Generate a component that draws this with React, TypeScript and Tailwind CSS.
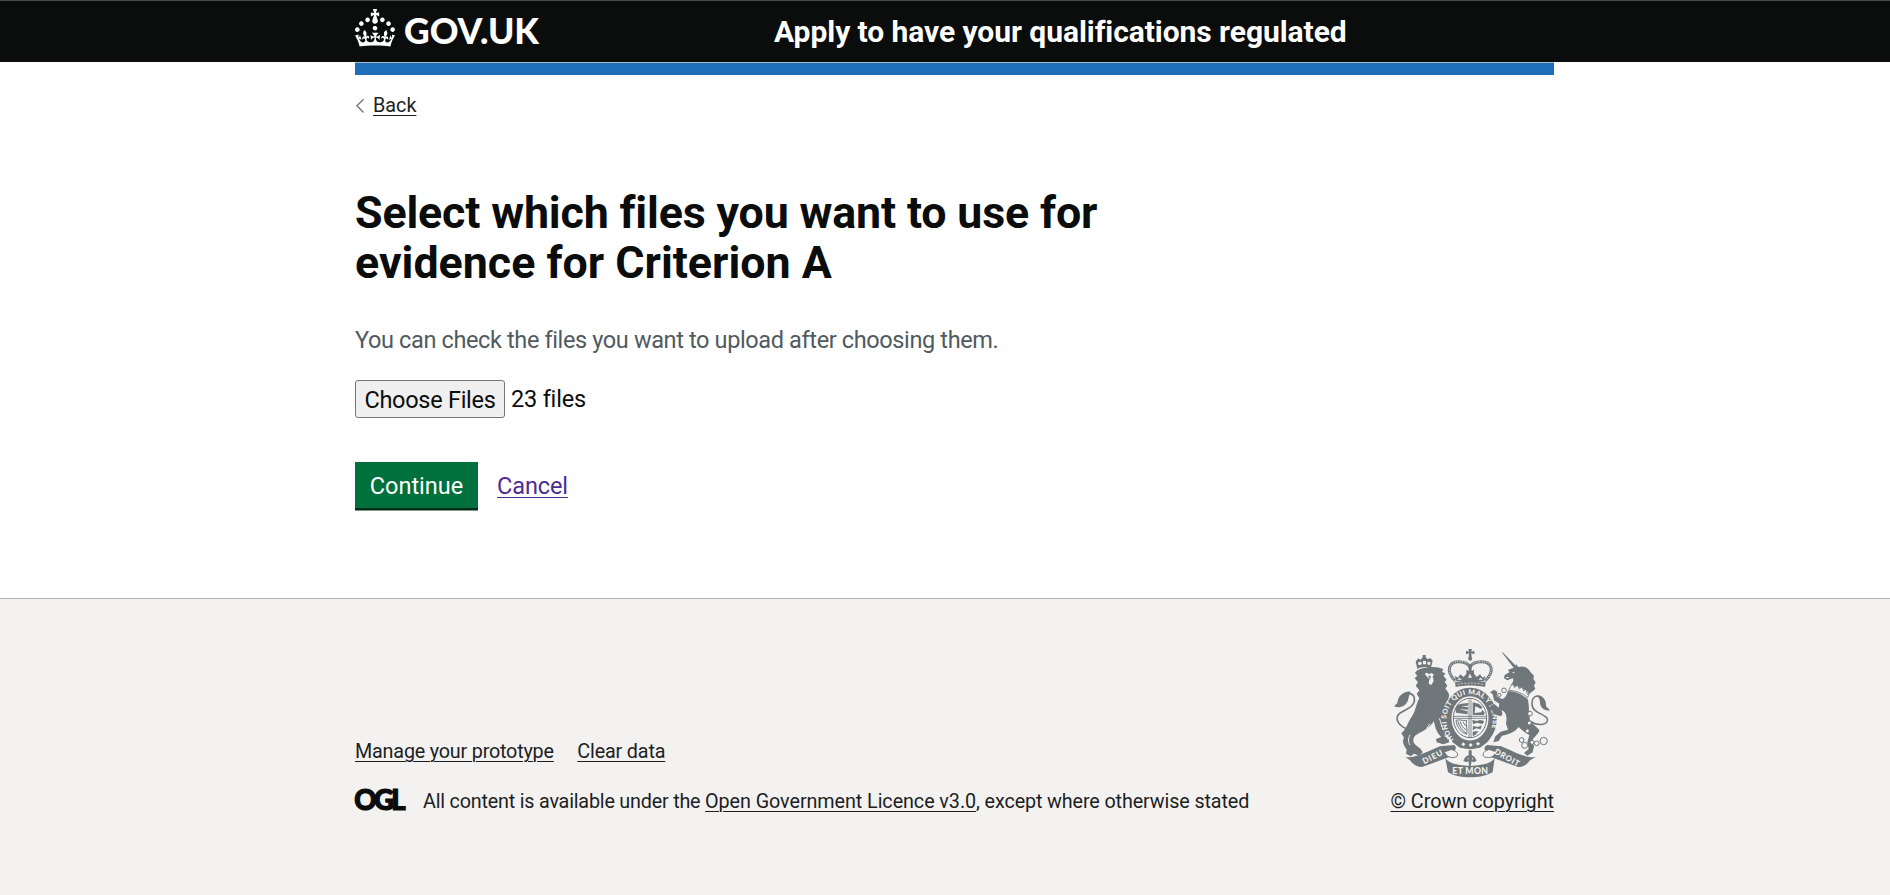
import React from "react";

const CROWN =
  "M22.6 10.4c-1 .4-2-.1-2.4-1-.4-.9.1-2 1-2.4.9-.4 2 .1 2.4 1s-.1 2-1 2.4m-5.9 6.7c-.9.4-2-.1-2.4-1-.4-.9.1-2 1-2.4.9-.4 2 .1 2.4 1s-.1 2-1 2.4m10.8-3.7c-1 .4-2-.1-2.4-1-.4-.9.1-2 1-2.4.9-.4 2 .1 2.4 1s0 2-1 2.4m3.3 4.8c-1 .4-2-.1-2.4-1-.4-.9.1-2 1-2.4.9-.4 2 .1 2.4 1s-.1 2-1 2.4M17 4.7l2.3 1.2V2.5l-2.3.7-.2-.2.9-3h-3.4l.9 3-.2.2c-.1.1-2.3-.7-2.3-.7v3.4L15 4.7c.1.1.1.2.2.2l-1.3 4c-.1.2-.1.4-.1.6 0 1.1.8 2 1.9 2.2h.7c1-.2 1.9-1.1 1.9-2.1 0-.2 0-.4-.1-.6l-1.3-4c-.1-.2 0-.2.1-.3m-7.6 5.7c.9.4 2-.1 2.4-1 .4-.9-.1-2-1-2.4-.9-.4-2 .1-2.4 1s0 2 1 2.4m-5 3c.9.4 2-.1 2.4-1 .4-.9-.1-2-1-2.4-.9-.4-2 .1-2.4 1s.1 2 1 2.4m-3.2 4.8c.9.4 2-.1 2.4-1 .4-.9-.1-2-1-2.4-.9-.4-2 .1-2.4 1s0 2 1 2.4m14.8 11c4.4 0 8.6.3 12.3.8 1.1-4.5 2.4-7 3.7-8.8l-2.5-.9c.2 1.3.3 1.9 0 2.7-.4-.4-.8-1.1-1.1-2.3l-1.2 4c.7-.5 1.3-.8 2-.9-1.1 2.5-2.6 3.1-3.5 3-1.1-.2-1.7-1.2-1.5-2.1.3-1.2 1.5-1.5 2.1-.1 1.1-2.3-.8-3-2-2.3 1.9-1.9 2.1-3.5.6-5.6-2.1 1.6-2.1 3.2-1.2 5.5-1.2-1.4-3.2-.6-2.5 1.6.9-1.4 2.1-.5 1.9.8-.2 1.1-1.7 2.1-3.5 1.9-2.7-.2-2.9-2.1-2.9-3.6.7-.1 1.9.5 2.9 1.9l.4-4.3c-1.1 1.1-2.1 1.4-3.2 1.4.4-1.2 2.1-3 2.1-3h-5.4s1.7 1.9 2.1 3c-1.1 0-2.1-.2-3.2-1.4l.4 4.3c1-1.4 2.2-2 2.9-1.9-.1 1.5-.2 3.4-2.9 3.6-1.9.2-3.4-.8-3.5-1.9-.2-1.3 1-2.2 1.9-.8.7-2.3-1.2-3-2.5-1.6.9-2.2.9-3.9-1.2-5.5-1.5 2-1.3 3.7.6 5.6-1.2-.7-3.1 0-2 2.3.6-1.4 1.8-1.1 2.1.1.2.9-.3 1.9-1.5 2.1-.9.2-2.4-.5-3.5-3 .6 0 1.2.3 2 .9l-1.2-4c-.3 1.1-.7 1.9-1.1 2.3-.3-.8-.2-1.4 0-2.7l-2.9.9C1.3 23 2.6 25.5 3.7 30c3.7-.5 7.9-.8 12.3-.8";

function Header() {
  return (
    <header className="h-[62px] shrink-0 border-t border-[#484b4a] bg-[#0b0c0c] text-white">
      <div className="ml-[355px] flex h-[61px] w-[1199px]">
        <a className="flex w-[419px] items-start pt-2">
          <svg viewBox="0 0 32 30" className="h-[37.5px] w-10 shrink-0" fill="currentColor">
            <path d={CROWN} />
          </svg>
          <svg viewBox="0 -4 160 50" className="-mt-1 ml-2 h-[50px] w-[160px] overflow-visible" fill="currentColor">
            <text x="1" y="35" fontFamily="Lato, sans-serif" fontWeight="900" fontSize="36.5" textLength="135" lengthAdjust="spacingAndGlyphs">GOV.UK</text>
          </svg>
        </a>
        <span className="whitespace-nowrap pt-[12px] text-[30px] font-bold leading-[38px] tracking-[-0.06px]">
          Apply to have your qualifications regulated
        </span>
      </div>
    </header>
  );
}

function Crest() {
  return (
    <svg viewBox="42 42 468 386" className="mr-1 h-[128.7px] w-[156px]" fill="#6f777b">
      {/* lion: crown, body, face, tail */}
      <path d="M112 102L107 80L114 70L122 74L128 66L128 60H137V66L143 73L151 69L158 77L152 101C140 94 124 95 112 102Z" />
      <path d="M114 82L124 80L126 88L116 91ZM129 78L138 78L138 88L129 88ZM143 80L152 82L149 91L142 88Z" fill="#f3f2f1" />
      <path d="M110 107C130 95 170 92 190 103L186 110L197 116L190 122L200 134L194 140L202 152L196 160L204 172C214 186 200 196 196 212C192 228 206 236 212 254C200 270 204 288 208 300L192 302L206 312L208 322L190 328L170 322L168 312L184 306C172 296 164 276 162 258C152 274 134 286 122 292C106 300 100 306 100 318C102 330 114 334 122 342L128 352L118 362L102 356L92 364L78 356L80 344C70 330 66 318 72 308L64 294C78 286 82 264 96 244C108 226 108 206 118 190L110 176L118 166L107 152L114 142L104 130L112 122L105 114Z" />
      <path d="M134 116L142 113L146 118L155 114L162 119L158 124L161 138L154 150L146 146L148 132L140 124Z" fill="#f3f2f1" />
      <path d="M145 122L153 122L150 136Z" />
      <path d="M140 280L150 266M90 300C84 310 84 320 90 330M178 250C184 262 184 276 190 286" fill="none" stroke="#f3f2f1" strokeWidth="3" />
      <path d="M88 284C56 276 42 250 58 236C78 222 106 216 103 190C101 174 84 172 74 184" fill="none" stroke="#6f777b" strokeWidth="5" />
      <path d="M92 170C74 168 54 180 52 204L42 214C64 222 80 210 84 196C86 186 88 178 92 170Z" />
      {/* imperial crown */}
      <path d="M265 42H276L274 50L283 47V58L274 55L275 68H266L267 55L258 58V47L267 50Z" />
      <circle cx="270.5" cy="71" r="6" />
      <path d="M226 138C196 108 206 80 236 80C254 80 264 84 270 96C276 84 288 80 304 80C336 80 346 108 315 138" fill="none" stroke="#6f777b" strokeWidth="9" />
      <path d="M226 138C196 108 206 80 236 80C254 80 264 84 270 96C276 84 288 80 304 80C336 80 346 108 315 138" fill="none" stroke="#f3f2f1" strokeWidth="3" strokeDasharray="3 4" />
      <path d="M266 88H275V108L282 104V116L290 126L300 118L308 128L316 122L312 138H229L224 122L234 128L241 118L251 126L259 116V104L266 108Z" />
      <path d="M238 128L246 134H232ZM302 128L309 134H295ZM270 116L276 128H264Z" fill="#f3f2f1" />
      <path d="M225 141C255 136 287 136 317 141L315 156C285 150 257 150 227 156Z" />
      <path d="M233 148C258 143 284 143 309 148" fill="none" stroke="#f3f2f1" strokeWidth="2" strokeDasharray="6 4" />
      {/* garter */}
      <ellipse cx="270" cy="250" rx="68" ry="79" fill="#f3f2f1" stroke="#6f777b" strokeWidth="25" />
      <path id="garter" d="M222 314C170 246 216 178 270 178C334 178 362 266 314 316" fill="none" />
      <text fontFamily="Lato, sans-serif" fontWeight="900" fontSize="21" fill="#f3f2f1">
        <textPath href="#garter" textLength="320">HONI SOIT QUI MAL Y PENSE</textPath>
      </text>
      <path d="M226 306L240 318L300 320L316 306L326 318L300 338L270 343L240 338L216 320Z" />
      <path d="M250 322L256 328L250 334L244 328ZM272 324L278 330L272 336L266 330ZM294 320L300 326L294 332L288 326Z" fill="#f3f2f1" />
      {/* shield */}
      <ellipse cx="270" cy="249" rx="50" ry="59" fill="#f3f2f1" stroke="#6f777b" strokeWidth="3" />
      <path d="M267 194V306M273 194V306M222 244H319M222 250H319" stroke="#6f777b" strokeWidth="2.5" />
      <path d="M232 210L244 206L264 204V212L242 213L264 217V224L236 222L263 229V238L228 233L226 224ZM278 202L296 206L308 217L303 222L286 214L284 234L304 232L306 224L314 232L312 240H278ZM277 255L290 258L300 255L313 258L308 267L290 263L279 268ZM279 273L294 276L305 271L302 283L288 280L278 286ZM278 290L296 288L286 300L278 303Z" />
      <path d="M228 256C238 252 246 258 260 256C256 268 264 284 260 298C246 294 230 278 228 256ZM234 259C238 276 246 286 258 294M241 260C244 272 250 280 258 284M249 260L257 273" fill="none" stroke="#6f777b" strokeWidth="3" />
      <path d="M292 216L297 222L292 228L286 222Z" fill="#f3f2f1" />
      {/* unicorn */}
      <path d="M364 50L370 54L409 94L402 100Z" />
      <path d="M402 98L410 88L414 96C434 90 446 100 452 112L462 122L460 132L467 142L462 152L466 162L456 170L448 176C438 162 412 156 392 150C400 140 402 134 398 130L382 136L372 130L374 120L388 112L384 104Z" />
      <path d="M396 112L404 110L402 115ZM378 126L390 126L380 130Z" fill="#f3f2f1" />
      <path d="M392 154L398 146L404 158L412 150L418 162L426 155L431 168L438 162L442 178L448 174L443 188C428 174 404 166 386 166Z" fill="#f3f2f1" stroke="#6f777b" strokeWidth="2.5" />
      <path d="M384 168C408 168 430 180 444 194C448 214 446 236 450 256C458 270 472 276 478 286C476 298 462 306 456 318L462 334L458 352L442 362L432 354L446 342L442 322L448 300C434 292 424 284 416 276C404 292 386 298 366 302L356 318L340 322L346 304L362 290L384 284L378 266C382 244 378 230 364 226C368 234 370 242 360 244C344 240 334 226 330 214L342 206L356 218L358 206L342 196L338 178L330 172L342 164L352 170L350 184L366 192C380 188 380 176 384 168Z" />
      <path d="M448 258C478 276 506 268 502 252C498 236 456 236 456 206C456 184 472 178 486 188" fill="none" stroke="#6f777b" strokeWidth="4.5" />
      <path d="M470 182C486 180 500 194 498 214L510 226C494 230 480 218 480 202C480 192 476 186 470 182Z" />
      <g fill="#f3f2f1" stroke="#6f777b" strokeWidth="3">
        <circle cx="372" cy="166" r="7" />
        <circle cx="358" cy="180" r="5" />
        <circle cx="450" cy="236" r="7" />
        <circle cx="448" cy="264" r="6" />
        <circle cx="442" cy="288" r="6" />
        <circle cx="425" cy="315" r="7" />
        <circle cx="434" cy="331" r="9" />
        <circle cx="456" cy="322" r="6" />
        <circle cx="470" cy="325" r="7" />
        <circle cx="491" cy="318" r="11" />
      </g>
      {/* thistle and motto scroll */}
      <path d="M266 346H275V360L284 366L290 378L280 382L275 378L272 394H268L265 378L260 382L250 378L256 366L266 360Z" />
      <path d="M262 370L266 368L265 374ZM276 368L280 371L276 374Z" fill="#f3f2f1" />
      <path d="M90 376L76 366C104 372 150 346 180 334L222 330C232 336 228 350 212 352L214 364L126 396C112 396 100 390 90 376Z" />
      <path d="M450 376L468 366C438 372 394 346 364 334L322 330C308 336 312 350 328 352L326 364L414 396C428 396 440 390 450 376Z" />
      <path d="M194 352C200 366 212 370 228 366C240 360 228 346 216 344M348 352C342 366 330 370 314 366C302 360 314 346 326 344" fill="#f3f2f1" stroke="#6f777b" strokeWidth="3" />
      <path d="M196 370C206 386 240 392 270 392C300 392 334 386 344 370L338 412C316 424 294 427 270 427C246 427 224 424 204 412Z" />
      <g fontFamily="Lato, sans-serif" fontWeight="900" fontSize="26" fill="#f3f2f1">
        <text transform="translate(133 388) rotate(-28)" fontSize="24" textLength="64">DIEU</text>
        <text x="217" y="418" textLength="107">ET MON</text>
        <text transform="translate(341 355) rotate(29)" fontSize="24" textLength="82">DROIT</text>
      </g>
    </svg>
  );
}

const link = "underline decoration-1 underline-offset-[3px]";

function Footer() {
  return (
    <footer className="h-[297px] shrink-0 border-t border-[#b1b4b6] bg-[#f3f2f1] text-[19.75px] leading-[25px] text-[#1c1e1f]">
      <div className="ml-[355px] flex h-[215px] w-[1199px] items-end justify-between">
        <div>
          <div className="mb-[25px] flex gap-[23.5px]">
            <a className={`${link} tracking-[-0.19px]`}>Manage your prototype</a>
            <a className={`${link} tracking-[-0.16px]`}>Clear data</a>
          </div>
          <div className="flex whitespace-pre">
            <svg viewBox="0 -4 60 34" className="-mb-2 -mt-1 mr-2 h-[34px] w-[60px] overflow-visible" fill="#0b0c0c">
              <text x="-0.8" y="20.7" fontFamily="Lato, sans-serif" fontWeight="900" fontSize="27.5" stroke="#0b0c0c" strokeWidth="1.2" textLength="51.5" lengthAdjust="spacing">OGL</text>
            </svg>
            <span className="tracking-[-0.2px]">All content is available under the </span>
            <a className={`${link} tracking-[-0.07px]`}>Open Government Licence v3.0</a>
            <span className="tracking-[-0.12px]">, except where otherwise stated</span>
          </div>
        </div>
        <div className="flex w-[163px] flex-col items-end">
          <Crest />
          <a className={`${link} mt-[11px] whitespace-nowrap`}>© Crown copyright</a>
        </div>
      </div>
    </footer>
  );
}

export default function App() {
  return (
    <div className="flex h-[895px] flex-col overflow-hidden bg-white font-['Roboto','Liberation_Sans',sans-serif] text-[#0b0c0c]">
      <Header />
      <main className="ml-[355px] w-[1199px] flex-1">
        <div className="h-[13px] border-t border-[#a9bccb] bg-[#1d70b8]" />
        <a className="mt-[18px] flex h-[25px] items-center text-[19.75px] leading-[25px] text-[#1c1e1f]">
          <svg viewBox="0 0 10 16" className="mr-2 h-4 w-[10px]" fill="none" stroke="#6f777b" strokeWidth="1.4">
            <path d="M8.5 1.2L2 7.8L8.5 14.4" />
          </svg>
          <span className={link}>Back</span>
        </a>
        <h1 className="mt-[70px] w-[800px] text-[44.75px] font-bold leading-[50px]">
          <span className="block tracking-[-0.16px]">Select which files you want to use for</span>
          evidence for Criterion A
        </h1>
        <p className="mt-[37px] text-[23.5px] leading-[31px] tracking-[-0.37px] text-[#505a5f]">
          You can check the files you want to upload after choosing them.
        </p>
        <div className="mt-[24px] flex h-[38px] items-center text-[23.5px]">
          <button className="flex h-[38px] w-[150px] items-center justify-center rounded-[3px] border border-[#767676] bg-[#efefef] pt-[3px] tracking-[-0.28px]">
            Choose Files
          </button>
          <span className="ml-[6px] pt-[2px] tracking-[-0.2px]">23 files</span>
        </div>
        <div className="mt-[44px] flex items-center text-[23.5px] leading-[30px]">
          <button className="h-[46px] w-[123px] bg-[#00703c] pt-[2px] text-white shadow-[0_2.5px_0_#002d18]">Continue</button>
          <a className="ml-[19px] pt-[2px] tracking-[-0.1px] text-[#4c2c92] underline decoration-1 underline-offset-[3px]">Cancel</a>
        </div>
      </main>
      <Footer />
    </div>
  );
}
